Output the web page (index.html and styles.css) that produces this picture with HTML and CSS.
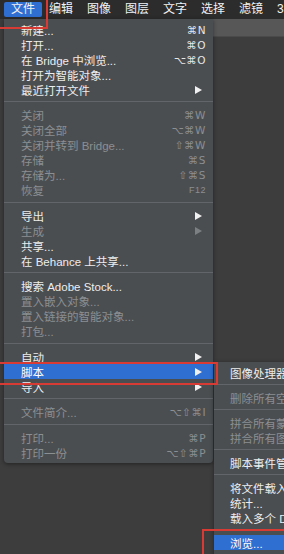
FILE: index.html
```html
<!DOCTYPE html>
<html lang="zh-CN">
<head>
    <meta charset="UTF-8">
    <title>文件菜单</title>
    <link rel="stylesheet" href="styles.css">
</head>
<body>
    <div class="screen">
        <div class="menubar">
            <span class="bar-item open">文件</span>
            <span class="bar-item">编辑</span>
            <span class="bar-item">图像</span>
            <span class="bar-item">图层</span>
            <span class="bar-item">文字</span>
            <span class="bar-item">选择</span>
            <span class="bar-item">滤镜</span>
            <span class="bar-item">3D</span>
        </div>
        <div class="workspace">
            <div class="tabstrip"></div>
        </div>

        <!-- file menu -->
        <div class="menu file-menu">
            <div class="row"><span>新建...</span><span class="key">⌘N</span></div>
            <div class="row"><span>打开...</span><span class="key">⌘O</span></div>
            <div class="row"><span>在 Bridge 中浏览...</span><span class="key">⌥⌘O</span></div>
            <div class="row"><span>打开为智能对象...</span></div>
            <div class="row"><span>最近打开文件</span><span class="arrow"></span></div>
            <div class="sep"></div>
            <div class="row off"><span>关闭</span><span class="key">⌘W</span></div>
            <div class="row off"><span>关闭全部</span><span class="key">⌥⌘W</span></div>
            <div class="row off"><span>关闭并转到 Bridge...</span><span class="key">⇧⌘W</span></div>
            <div class="row off"><span>存储</span><span class="key">⌘S</span></div>
            <div class="row off"><span>存储为...</span><span class="key">⇧⌘S</span></div>
            <div class="row off"><span>恢复</span><span class="key small">F12</span></div>
            <div class="sep"></div>
            <div class="row"><span>导出</span><span class="arrow"></span></div>
            <div class="row off"><span>生成</span><span class="arrow"></span></div>
            <div class="row"><span>共享...</span></div>
            <div class="row"><span>在 Behance 上共享...</span></div>
            <div class="sep"></div>
            <div class="row"><span>搜索 Adobe Stock...</span></div>
            <div class="row off"><span>置入嵌入对象...</span></div>
            <div class="row off"><span>置入链接的智能对象...</span></div>
            <div class="row off"><span>打包...</span></div>
            <div class="sep"></div>
            <div class="row"><span>自动</span><span class="arrow"></span></div>
            <div class="row active"><span>脚本</span><span class="arrow"></span></div>
            <div class="row"><span>导入</span><span class="arrow"></span></div>
            <div class="sep"></div>
            <div class="row off"><span>文件简介...</span><span class="key">⌥⇧⌘I</span></div>
            <div class="sep"></div>
            <div class="row off"><span>打印...</span><span class="key">⌘P</span></div>
            <div class="row off"><span>打印一份</span><span class="key">⌥⇧⌘P</span></div>
        </div>

        <!-- scripts submenu -->
        <div class="menu sub-menu">
            <div class="row"><span>图像处理器...</span></div>
            <div class="sep"></div>
            <div class="row off"><span>删除所有空图层</span></div>
            <div class="sep"></div>
            <div class="row off"><span>拼合所有蒙版</span></div>
            <div class="row off"><span>拼合所有图层效果</span></div>
            <div class="sep"></div>
            <div class="row"><span>脚本事件管理器...</span></div>
            <div class="sep"></div>
            <div class="row"><span>将文件载入堆栈...</span></div>
            <div class="row"><span>统计...</span></div>
            <div class="row"><span>载入多个 DICOM 文件...</span></div>
            <div class="sep"></div>
            <div class="row active"><span>浏览...</span></div>
        </div>

        <!-- red callouts -->
        <div class="mark mark-file"></div>
        <div class="mark mark-script"></div>
        <div class="mark mark-browse"></div>
    </div>
</body>
</html>
```

FILE: styles.css
```css
body {
    margin: 0;
    background: #3c3c3c;
    font-family: "Liberation Sans", "Noto Sans CJK SC", sans-serif;
    font-size: 11.5px;
    color: #ededed;
}
.screen {
    position: relative;
    width: 284px;
    height: 554px;
    overflow: hidden;
}
.menubar {
    display: flex;
    height: 19px;
    padding-left: 4px;
    background: #2c2c2c;
    align-items: center;
    white-space: nowrap;
}
.bar-item {
    padding: 0 7px;
    line-height: 15px;
    font-size: 12px;
    color: #f2f2f2;
}
.bar-item.open {
    background: #2f6fd2;
    border-radius: 2px;
}
.workspace {
    height: 535px;
    background: #3d3d3d;
}
.tabstrip {
    height: 17px;
    margin-left: 210px;
    background: #575757;
    border-bottom: 1px solid #4a4a4a;
}

.menu {
    position: absolute;
    background: #4b4e51;
    box-shadow: 0 1px 4px rgba(0, 0, 0, 0.45);
}
.file-menu {
    left: 4px;
    top: 19px;
    width: 209px;
    padding: 3px 0 3px;
    border-radius: 0 0 4px 4px;
}
.sub-menu {
    left: 214px;
    top: 362px;
    width: 140px;
    height: 200px;
    padding-top: 3px;
    border-radius: 4px;
}
.row {
    display: flex;
    justify-content: space-between;
    align-items: center;
    height: 15px;
    padding: 0 7px 0 17px;
    white-space: nowrap;
}
.sub-menu .row {
    padding-left: 16px;
}
.row.off {
    color: #8c8f92;
}
.row.active {
    background: #2f6fd2;
    color: #fff;
}
.key {
    font-family: "DejaVu Sans", sans-serif;
    font-size: 10.5px;
    letter-spacing: 0.5px;
    color: #e6e6e6;
}
.off .key {
    color: #8c8f92;
}
.key.small {
    font-family: "Liberation Sans", sans-serif;
    font-size: 9px;
}
.arrow {
    width: 0;
    height: 0;
    margin-right: 4px;
    border-top: 4.5px solid transparent;
    border-bottom: 4.5px solid transparent;
    border-left: 7px solid #f0f0f0;
}
.off .arrow {
    border-left-color: #7d8083;
}
.file-menu .sep {
    height: 1px;
    margin: 4px 0 5.5px;
    background: #62656a;
}
.sub-menu .sep {
    height: 1px;
    margin: 4px 0 5px;
    background: #62656a;
}

.mark {
    position: absolute;
    border: 2px solid #d83a34;
}
.mark-file {
    left: -10px;
    top: -2px;
    width: 54px;
    height: 27px;
}
.mark-script {
    left: -10px;
    top: 362px;
    width: 224px;
    height: 19px;
}
.mark-browse {
    left: 202px;
    top: 529px;
    width: 120px;
    height: 60px;
}
```
